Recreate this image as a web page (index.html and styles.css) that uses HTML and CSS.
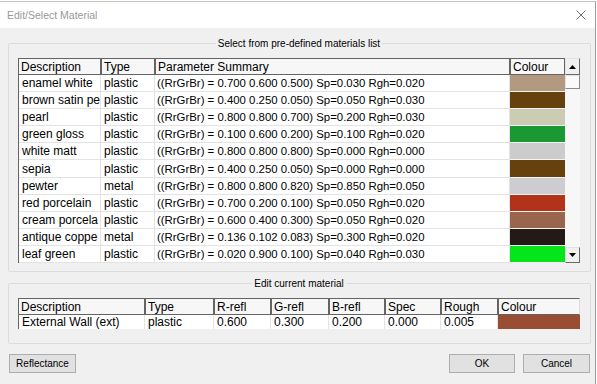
FILE: index.html
```html
<!DOCTYPE html>
<html lang="en">
<head>
    <meta charset="UTF-8">
    <title>Edit/Select Material</title>
    <link rel="stylesheet" href="styles.css">
</head>
<body>
<div class="screen">
  <div class="dialog">
    <div class="titlebar">
      <span class="title">Edit/Select Material</span>
      <svg class="close" width="10" height="10" viewBox="0 0 10 10"><path d="M0.5 0.5 L9.5 9.5 M9.5 0.5 L0.5 9.5" stroke="#707070" stroke-width="1" fill="none"/></svg>
    </div>

    <div class="content">
      <fieldset class="group group-list">
        <legend>Select from pre-defined materials list</legend>
        <div class="listbox">
          <table class="grid materials">
            <colgroup>
              <col style="width:82px"><col style="width:54px"><col style="width:355px"><col style="width:55px">
            </colgroup>
            <tr><th>Description</th><th>Type</th><th>Parameter Summary</th><th>Colour</th></tr>
            <tr><td>enamel white</td><td>plastic</td><td class="sum">((RrGrBr) = 0.700 0.600 0.500) Sp=0.030 Rgh=0.020</td><td class="swatch" style="background:#b39980"></td></tr>
            <tr><td>brown satin pe</td><td>plastic</td><td class="sum">((RrGrBr) = 0.400 0.250 0.050) Sp=0.050 Rgh=0.030</td><td class="swatch" style="background:#66400d"></td></tr>
            <tr><td>pearl</td><td>plastic</td><td class="sum">((RrGrBr) = 0.800 0.800 0.700) Sp=0.200 Rgh=0.030</td><td class="swatch" style="background:#ccccb3"></td></tr>
            <tr><td>green gloss</td><td>plastic</td><td class="sum">((RrGrBr) = 0.100 0.600 0.200) Sp=0.100 Rgh=0.020</td><td class="swatch" style="background:#1a9933"></td></tr>
            <tr><td>white matt</td><td>plastic</td><td class="sum">((RrGrBr) = 0.800 0.800 0.800) Sp=0.000 Rgh=0.000</td><td class="swatch" style="background:#cccccc"></td></tr>
            <tr><td>sepia</td><td>plastic</td><td class="sum">((RrGrBr) = 0.400 0.250 0.050) Sp=0.000 Rgh=0.000</td><td class="swatch" style="background:#66400d"></td></tr>
            <tr><td>pewter</td><td>metal</td><td class="sum">((RrGrBr) = 0.800 0.800 0.820) Sp=0.850 Rgh=0.050</td><td class="swatch" style="background:#ccccd1"></td></tr>
            <tr><td>red porcelain</td><td>plastic</td><td class="sum">((RrGrBr) = 0.700 0.200 0.100) Sp=0.050 Rgh=0.020</td><td class="swatch" style="background:#b3331a"></td></tr>
            <tr><td>cream porcela</td><td>plastic</td><td class="sum">((RrGrBr) = 0.600 0.400 0.300) Sp=0.050 Rgh=0.020</td><td class="swatch" style="background:#99664d"></td></tr>
            <tr><td>antique coppe</td><td>metal</td><td class="sum">((RrGrBr) = 0.136 0.102 0.083) Sp=0.300 Rgh=0.020</td><td class="swatch" style="background:#231a15"></td></tr>
            <tr><td>leaf green</td><td>plastic</td><td class="sum">((RrGrBr) = 0.020 0.900 0.100) Sp=0.040 Rgh=0.030</td><td class="swatch" style="background:#05e61a"></td></tr>
          </table>
          <div class="scrollbar">
            <div class="sb-btn">
              <svg width="7" height="4" viewBox="0 0 7 4"><path d="M3.5 0 L7 4 L0 4 Z" fill="#000"/></svg>
            </div>
            <div class="sb-thumb"></div>
            <div class="sb-track"></div>
            <div class="sb-btn sb-down">
              <svg width="7" height="4" viewBox="0 0 7 4"><path d="M0 0 L7 0 L3.5 4 Z" fill="#000"/></svg>
            </div>
          </div>
        </div>
      </fieldset>

      <fieldset class="group group-edit">
        <legend>Edit current material</legend>
        <div class="editbox">
          <table class="grid current">
            <colgroup>
              <col style="width:126px"><col style="width:69px"><col style="width:57px"><col style="width:58px"><col style="width:56px"><col style="width:56px"><col style="width:57px"><col style="width:82px">
            </colgroup>
            <tr><th>Description</th><th>Type</th><th>R-refl</th><th>G-refl</th><th>B-refl</th><th>Spec</th><th>Rough</th><th class="last">Colour</th></tr>
            <tr><td>External Wall (ext)</td><td>plastic</td><td>0.600</td><td>0.300</td><td>0.200</td><td>0.000</td><td>0.005</td><td class="swatch" style="background:#994d33"></td></tr>
          </table>
        </div>
      </fieldset>

      <div class="buttons">
        <button class="btn btn-left">Reflectance</button>
        <button class="btn btn-ok">OK</button>
        <button class="btn btn-cancel">Cancel</button>
      </div>
    </div>
  </div>
</div>
</body>
</html>
```

FILE: styles.css
```css
* {
  box-sizing: border-box;
}

body {
  margin: 0;
  background: #fff;
  font-family: "Liberation Sans", Arial, sans-serif;
  color: #000;
}

.screen {
  display: flex;
  height: 384px;
  overflow: hidden;
}

.dialog {
  width: 596px;
  margin-top: 1px;
  border-top: 1px solid #c4c4c4;
  border-right: 1px solid #9a9a9a;
  background: #f0f0f0;
  display: flex;
  flex-direction: column;
}

.titlebar {
  height: 26px;
  background: #fff;
  display: flex;
  align-items: center;
  justify-content: space-between;
  padding: 0 9px 0 7px;
}

.title {
  font-size: 10.5px;
  color: #999;
}

.content {
  padding: 8px 4px 0 8px;
}

/* group boxes */
.group {
  margin: 0;
  min-width: 0;
  border: 1px solid #dcdcdc;
  border-radius: 2px;
  padding: 7px 10px 8px 9px;
}

.group legend {
  margin: 0 auto;
  padding: 0 2px;
  font-size: 10px;
  line-height: 15px;
}

.group-edit {
  margin-top: 4px;
  padding-bottom: 14px;
}

/* list boxes */
.listbox {
  display: flex;
  height: 205px;
  border-left: 1px solid #646464;
  overflow: hidden;
}

.editbox {
  height: 31px;
  border-left: 1px solid #646464;
  overflow: hidden;
}

.grid {
  border-collapse: separate;
  border-spacing: 0;
  table-layout: fixed;
  font-size: 12px;
  background: #fff;
}

.materials {
  width: 546px;
}

.current {
  width: 561px;
}

.grid th {
  height: 17px;
  padding: 0 0 0 2px;
  border: 1px solid #646464;
  background: #f7f7f7;
  font-weight: normal;
  text-align: left;
  white-space: nowrap;
  overflow: hidden;
}

.grid th:first-child {
  border-left: 0;
}

.grid th.last {
  border-right-color: #dcdcdc;
}

.grid td {
  height: 17px;
  padding: 0 0 0 3px;
  border-right: 1px solid #e3e3e3;
  border-bottom: 1px solid #e3e3e3;
  white-space: nowrap;
  overflow: hidden;
}

.grid td.sum {
  font-size: 11.4px;
  padding-left: 2px;
}

.current td {
  height: 15px;
}

.grid td.swatch {
  padding: 0;
  border-right: 0;
  border-bottom-color: #f4f4f4;
}

/* scrollbar */
.scrollbar {
  width: 15px;
  display: flex;
  flex-direction: column;
  background: #f7f7f7;
}

.sb-btn {
  height: 17px;
  background: #f0f0f0;
  border: 1px solid;
  border-color: #e3e3e3 #696969 #696969 #e3e3e3;
  display: flex;
  align-items: center;
  justify-content: center;
}

.sb-down {
  height: 16px;
}

.sb-thumb {
  height: 14px;
  background: #fafafa;
  border: 1px solid;
  border-color: #e3e3e3 #8a8a8a #8a8a8a #e3e3e3;
}

.sb-track {
  flex: 1;
}

/* buttons */
.buttons {
  display: flex;
  gap: 8px;
  margin-top: 10px;
}

.btn {
  height: 19px;
  width: 67px;
  padding: 0;
  font-family: "Liberation Sans", Arial, sans-serif;
  font-size: 10px;
  color: #000;
  background: #e1e1e1;
  border: 1px solid #adadad;
}

.btn-left {
  margin-left: 1px;
}

.btn-ok {
  margin-left: auto;
  width: 66px;
}

.btn-cancel {
  margin-right: 1px;
}
```
